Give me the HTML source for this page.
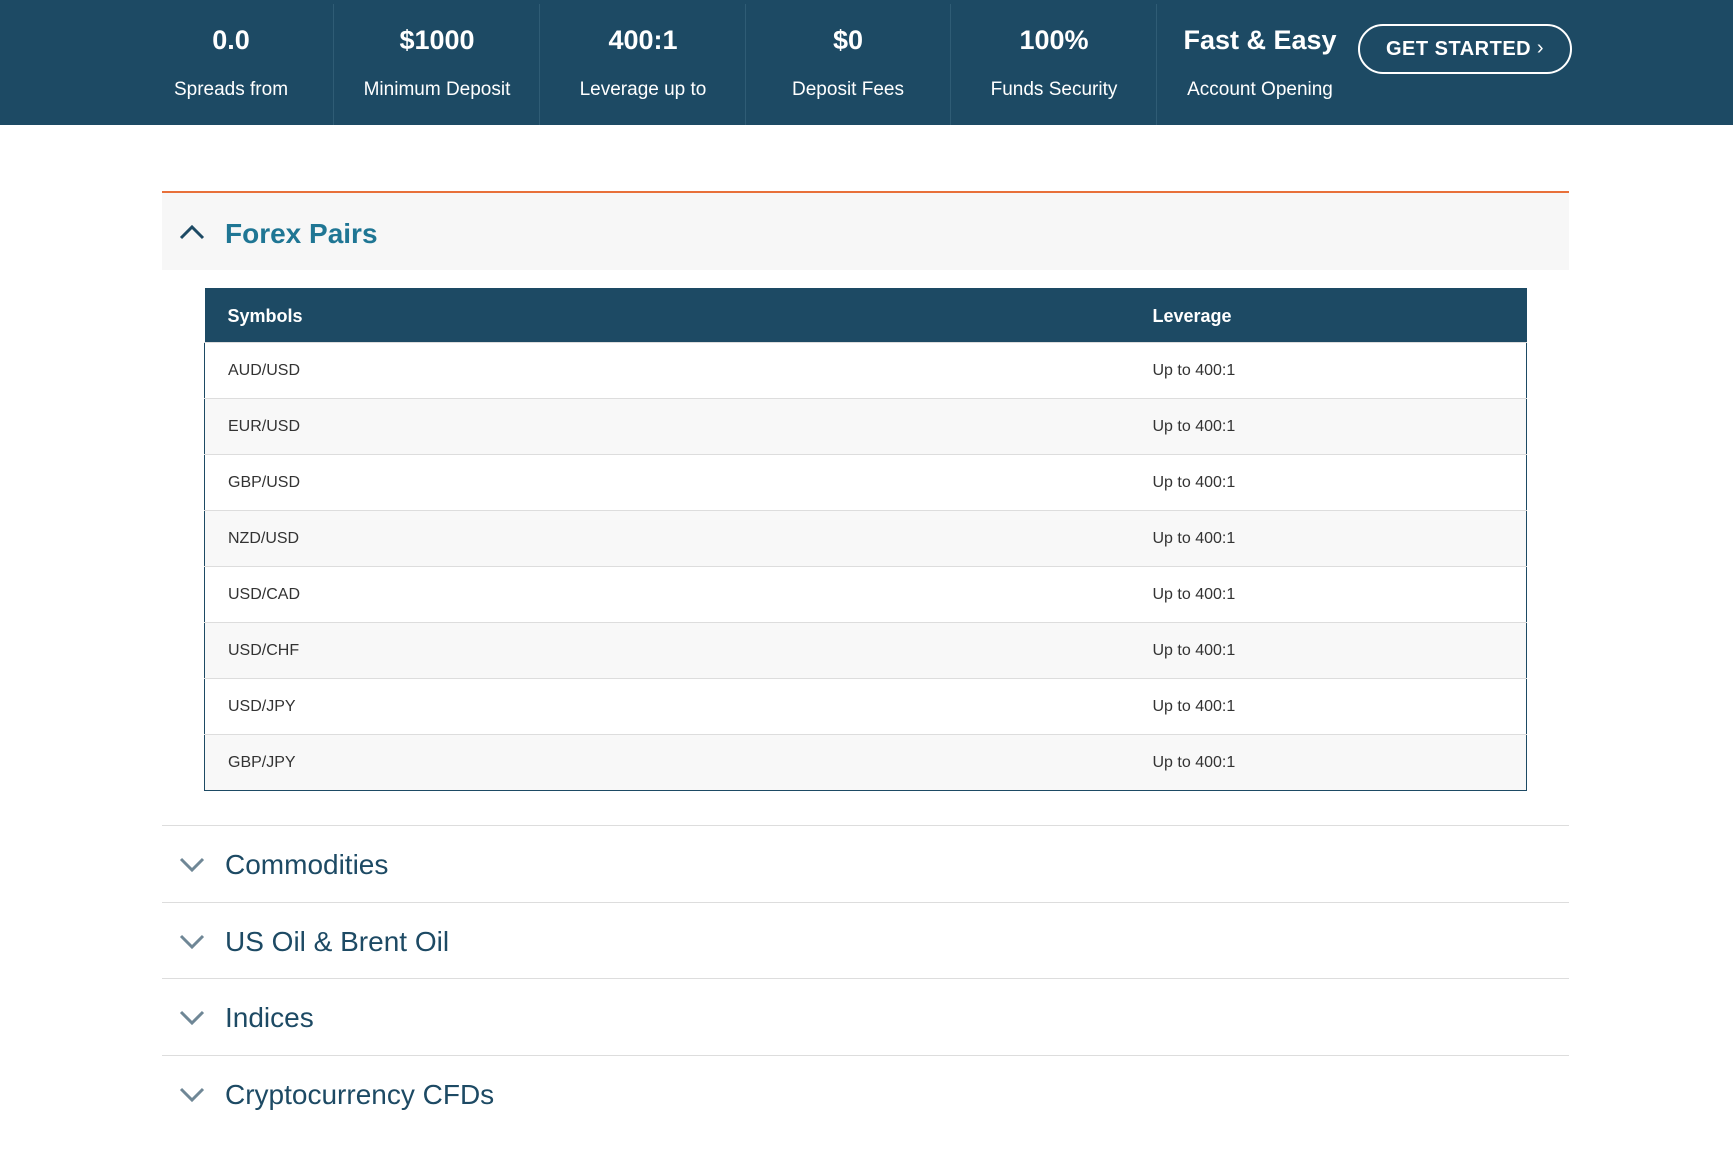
<!DOCTYPE html>
<html><head><meta charset="utf-8"><style>
*{margin:0;padding:0;box-sizing:border-box}
body{width:1733px;height:1171px;background:#fff;font-family:"Liberation Sans",sans-serif;position:relative;overflow:hidden}
.hdr{position:absolute;left:0;top:0;width:1733px;height:125px;background:#1d4a64}
.col{position:absolute;top:0;height:125px;width:206px;text-align:center;color:#fff}
.col .v{position:absolute;left:0;right:0;top:25px;font-size:27px;font-weight:bold}
.col .l{position:absolute;left:0;right:0;top:79px;font-size:19px}
.div{position:absolute;top:4px;height:121px;width:1px;background:#2f5c75}
.btn{position:absolute;left:1358px;top:24px;width:214px;height:50px;border:2px solid #fff;border-radius:25px;color:#fff;font-weight:bold;font-size:20px;line-height:46px;padding-left:26px;letter-spacing:.5px}
.btn span{position:absolute;right:26px;top:-1px;font-weight:normal}
.orange{position:absolute;left:162px;top:191px;width:1407px;height:2px;background:#e8703a}
.fxh{position:absolute;left:162px;top:193px;width:1407px;height:77px;background:#f7f7f7}
.title{position:absolute;left:225px;top:218px;font-size:28px;font-weight:bold;color:#1f7694}
table{position:absolute;left:204px;top:288px;width:1323px;border-collapse:collapse;font-size:16px;color:#333}
th{background:#1d4a64;color:#fff;height:54px;text-align:left;font-size:18px;padding-top:3px}
td{height:56px;border-top:1px solid #ddd;padding-top:2px}
tbody tr:nth-child(even) td{background:#f8f8f8}
tbody{border:1px solid #1d4a64;border-top:none}
.c1{padding-left:23px}
.c2{width:374px}
.acc{position:absolute;left:162px;width:1407px;height:1px;background:#ddd}
.at{position:absolute;left:225px;font-size:28px;color:#1d4a64}
svg.ch{position:absolute;left:178px}
</style></head><body>
<div class="hdr">
<div class="col" style="left:128px"><div class="v">0.0</div><div class="l">Spreads from</div></div>
<div class="col" style="left:334px"><div class="v">$1000</div><div class="l">Minimum Deposit</div></div>
<div class="col" style="left:540px"><div class="v">400:1</div><div class="l">Leverage up to</div></div>
<div class="col" style="left:745px"><div class="v">$0</div><div class="l">Deposit Fees</div></div>
<div class="col" style="left:951px"><div class="v">100%</div><div class="l">Funds Security</div></div>
<div class="col" style="left:1157px"><div class="v">Fast &amp; Easy</div><div class="l">Account Opening</div></div>
<div class="div" style="left:333px"></div><div class="div" style="left:539px"></div><div class="div" style="left:745px"></div><div class="div" style="left:950px"></div><div class="div" style="left:1156px"></div>
<div class="btn">GET STARTED<span>›</span></div>
</div>
<div class="orange"></div>
<div class="fxh"></div>
<svg class="ch" style="top:222px" width="28" height="20" viewBox="0 0 28 20"><path d="M3 16 L14 5 L25 16" fill="none" stroke="#1d4a64" stroke-width="3"/></svg>
<div class="title">Forex Pairs</div>
<table>
<thead><tr><th class="c1">Symbols</th><th class="c2">Leverage</th></tr></thead>
<tbody>
<tr><td class="c1">AUD/USD</td><td>Up to 400:1</td></tr>
<tr><td class="c1">EUR/USD</td><td>Up to 400:1</td></tr>
<tr><td class="c1">GBP/USD</td><td>Up to 400:1</td></tr>
<tr><td class="c1">NZD/USD</td><td>Up to 400:1</td></tr>
<tr><td class="c1">USD/CAD</td><td>Up to 400:1</td></tr>
<tr><td class="c1">USD/CHF</td><td>Up to 400:1</td></tr>
<tr><td class="c1">USD/JPY</td><td>Up to 400:1</td></tr>
<tr><td class="c1">GBP/JPY</td><td>Up to 400:1</td></tr>
</tbody></table>
<div class="acc" style="top:825px"></div>
<svg class="ch" style="top:855px" width="28" height="20" viewBox="0 0 28 20"><path d="M3 4 L14 15 L25 4" fill="none" stroke="#6f8796" stroke-width="3"/></svg>
<div class="at" style="top:849px">Commodities</div>
<div class="acc" style="top:902px"></div>
<svg class="ch" style="top:932px" width="28" height="20" viewBox="0 0 28 20"><path d="M3 4 L14 15 L25 4" fill="none" stroke="#6f8796" stroke-width="3"/></svg>
<div class="at" style="top:926px">US Oil &amp; Brent Oil</div>
<div class="acc" style="top:978px"></div>
<svg class="ch" style="top:1008px" width="28" height="20" viewBox="0 0 28 20"><path d="M3 4 L14 15 L25 4" fill="none" stroke="#6f8796" stroke-width="3"/></svg>
<div class="at" style="top:1002px">Indices</div>
<div class="acc" style="top:1055px"></div>
<svg class="ch" style="top:1085px" width="28" height="20" viewBox="0 0 28 20"><path d="M3 4 L14 15 L25 4" fill="none" stroke="#6f8796" stroke-width="3"/></svg>
<div class="at" style="top:1079px">Cryptocurrency CFDs</div>
</body></html>
